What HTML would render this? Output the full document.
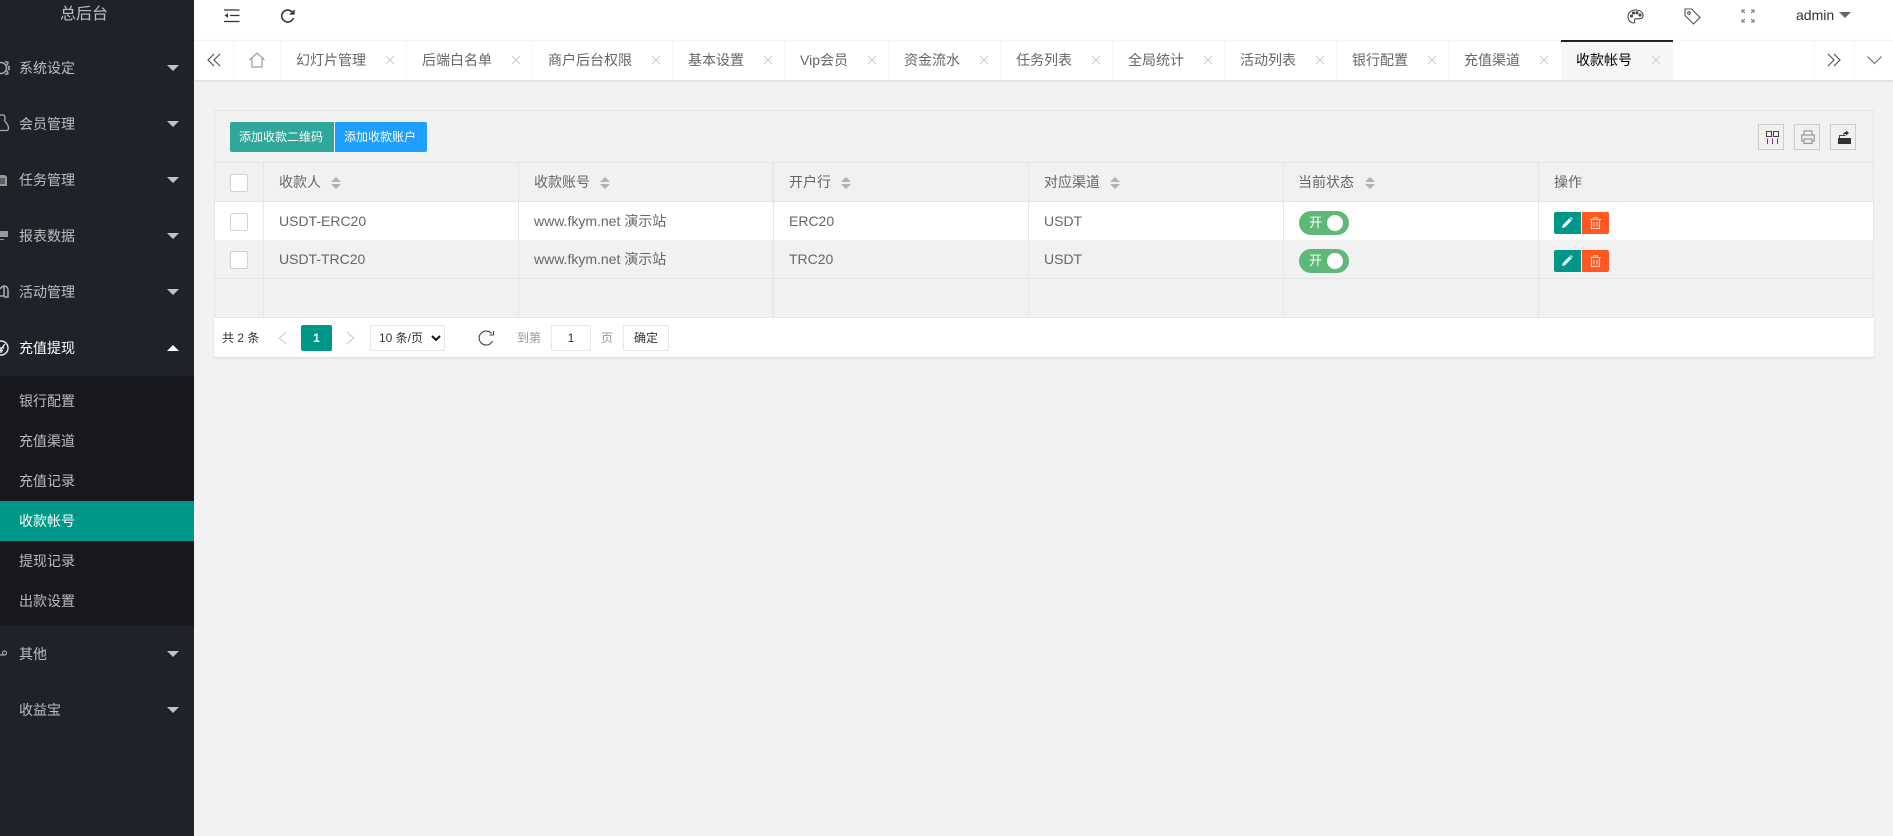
<!DOCTYPE html>
<html lang="zh"><head><meta charset="utf-8"><title>收款帐号</title>
<style>
*{box-sizing:border-box}
html,body{margin:0;padding:0;width:1893px;height:836px;overflow:hidden;background:#f2f2f2;font-family:"Liberation Sans","Noto Sans CJK SC",sans-serif;font-size:14px;color:#666}
span.t,div.t{position:absolute;white-space:nowrap;line-height:20px;height:20px}
svg{position:absolute;display:block}
#side{position:absolute;left:0;top:0;width:194px;height:836px;background:#20222a;overflow:hidden}
#side .t{left:19px;color:rgba(255,255,255,.7)}
.ar{position:absolute;left:167px;width:0;height:0;border-left:6px solid transparent;border-right:6px solid transparent;border-top:6px solid #c2c2c2}
#sub{position:absolute;left:0;top:376px;width:194px;height:250px;background:#17181d}
#act{position:absolute;left:0;top:501px;width:194px;height:40px;background:#009688}
#tabs{position:absolute;left:194px;top:40px;width:1699px;height:40px;background:#fff;border-top:1px solid #f6f6f6;box-shadow:0 1px 2px rgba(0,0,0,.12)}
.sp{position:absolute;top:41px;width:1px;height:39px;background:#f6f6f6}
.tb{position:absolute;top:50px;color:#666;line-height:20px;white-space:nowrap}
.ln{position:absolute;background:#e6e6e6}
.th,.td{position:absolute;white-space:nowrap;line-height:20px;color:#666}
.so{position:absolute;width:10px;height:12px}
.so:before,.so:after{content:"";position:absolute;left:0;border-left:5px solid transparent;border-right:5px solid transparent}
.so:before{top:0;border-bottom:5px solid #b2b2b2}
.so:after{bottom:0;border-top:5px solid #b2b2b2}
.cb{position:absolute;left:230px;width:18px;height:18px;background:#fff;border:1px solid #d2d2d2;border-radius:2px}
.sw{position:absolute;left:1299px;width:50px;height:24px;border-radius:12px;background:#5fb878}
.sw i{position:absolute;left:28px;top:4px;width:16px;height:16px;border-radius:50%;background:#fff}
.sw b{position:absolute;left:10px;top:2px;font-weight:400;font-size:13px;line-height:20px;color:#fff}
.be,.bd{position:absolute;width:27px;height:22px}
.be{left:1554px;background:#009688;border-radius:2px 0 0 2px}
.bd{left:1582px;background:#ff5722;border-radius:0 2px 2px 0}
.ib{position:absolute;top:124px;width:26px;height:26px;border:1px solid #ccc}
.x{position:absolute;top:56px}
</style></head><body>

<div id="side">
<span class="t" style="left:60px;top:5px;font-size:16px;width:48px;height:20px;color:rgba(255,255,255,.7)">总后台</span>
<div style="position:absolute;left:0;top:39px;width:194px;height:1px;background:#1c1e25"></div>
<div id="sub"></div><div id="act"></div>

<svg style="left:0;top:60px" width="10" height="16" viewBox="0 0 10 16" fill="none" stroke="#aaa" stroke-width="1.5"><circle cx="1" cy="8" r="5.5"/><path d="M5 1.500l3 1-1 3M8 6.500h1v3H8M5 14.500l3-1-1-3"/></svg>
<svg style="left:0;top:114px" width="10" height="18" viewBox="0 0 10 18" fill="none" stroke="#aaa" stroke-width="1.3"><path d="M0 1h3c2 0 2.500 3 1.500 5.500 1 2 4 3.500 4 8 0 1-1 2-2 2H0"/></svg>
<svg style="left:0;top:174px" width="7" height="12" viewBox="0 0 7 12" fill="#999"><path d="M0 1h5l2 2v9H0z"/><path d="M0 5h5M0 7h5M0 9h5" stroke="#20222a"/></svg>
<svg style="left:0;top:230px" width="8" height="11" viewBox="0 0 8 11" fill="#999"><path d="M0 1h8v6H0zM0 9h4v1H0z"/></svg>
<svg style="left:0;top:285px" width="9" height="14" viewBox="0 0 9 14" fill="none" stroke="#aaa" stroke-width="1.6"><path d="M0 4c2-3 4-3 4-3v10H0M4 1c3 0 4 2 4 4v7H4"/></svg>
<svg style="left:0;top:340px" width="10" height="16" viewBox="0 0 10 16" fill="none" stroke="#eee" stroke-width="1.4"><circle cx="1" cy="8" r="7"/><path d="M0 8h4M0 10.500h3M5 4L1 9v4"/></svg>
<svg style="left:0;top:650px" width="8" height="8" viewBox="0 0 8 8" fill="none" stroke="#aaa" stroke-width="1.2"><circle cx="4.500" cy="3" r="2"/><path d="M0 5h3"/></svg>

<span class="t" style="top:58px">系统设定</span><i class="ar" style="top:65px"></i>
<span class="t" style="top:114px">会员管理</span><i class="ar" style="top:121px"></i>
<span class="t" style="top:170px">任务管理</span><i class="ar" style="top:177px"></i>
<span class="t" style="top:226px">报表数据</span><i class="ar" style="top:233px"></i>
<span class="t" style="top:282px">活动管理</span><i class="ar" style="top:289px"></i>
<span class="t" style="top:338px;color:#fff">充值提现</span><i class="ar" style="top:345px;border-top:0;border-bottom:6px solid #fff"></i>
<span class="t" style="top:391px">银行配置</span>
<span class="t" style="top:431px">充值渠道</span>
<span class="t" style="top:471px">充值记录</span>
<span class="t" style="top:511px;color:#fff">收款帐号</span>
<span class="t" style="top:551px">提现记录</span>
<span class="t" style="top:591px">出款设置</span>
<span class="t" style="top:644px">其他</span><i class="ar" style="top:651px"></i>
<span class="t" style="top:700px">收益宝</span><i class="ar" style="top:707px"></i>
</div>

<!-- header -->
<div style="position:absolute;left:194px;top:0;width:1699px;height:40px;background:#fff"></div>
<svg style="left:224px;top:9px" width="16" height="14" viewBox="0 0 16 14" fill="none" stroke="#333" stroke-width="1.3"><path d="M0 1h15.500M6 6.500h9.500M0 12.500h15.500"/><path d="M.5 6.500L4 4.200v4.600z" fill="#333" stroke="none"/></svg>
<svg style="left:280px;top:8px" width="16" height="16" viewBox="0 0 16 16" fill="none" stroke="#333" stroke-width="1.6"><path d="M13.400 10a6 6 0 1 1-1.400-6.200"/><path d="M14.600 1.200v5.400H9.200z" fill="#333" stroke="none"/></svg>
<svg style="left:1627px;top:9px" width="17" height="15" viewBox="0 0 17 15" fill="none" stroke="#444" stroke-width="1.1"><path d="M8.500 1C4 1 1 4 1 8s3.500 6 5.500 6c1.500 0 1.500-1 1-2-.5-1.300.5-2.500 2-2.300 3 .3 6.500 0 6.500-3C16 3 12.500 1 8.500 1z"/><circle cx="4.500" cy="7" r="1" fill="#444"/><circle cx="6.500" cy="4" r="1" fill="#444"/><circle cx="10" cy="3.800" r="1" fill="#444"/><circle cx="13" cy="6" r="1" fill="#444"/></svg>
<svg style="left:1684px;top:8px" width="17" height="17" viewBox="0 0 17 17" fill="none" stroke="#555" stroke-width="1.1"><path d="M1 1h6.500l8.500 8.500L9.500 16 1 7.500z"/><circle cx="5" cy="5" r="1.300"/></svg>
<svg style="left:1741px;top:9px" width="14" height="14" viewBox="0 0 14 14" fill="none" stroke="#777" stroke-width="1"><path d="M1 4V1h3M1 1l3 3M10 1h3v3M13 1l-3 3M1 10v3h3M1 13l3-3M13 10v3h-3M13 13l-3-3"/></svg>
<span class="t" style="left:1796px;top:5px;color:#333;font-size:14px">admin</span>
<i style="position:absolute;left:1839px;top:12px;width:0;height:0;border-left:6px solid transparent;border-right:6px solid transparent;border-top:6px solid #666"></i>

<!-- tabs -->
<div id="tabs"></div>
<div style="position:absolute;left:1561px;top:40px;width:112px;height:40px;background:#f6f6f6;border-top:2px solid #20222a"></div>
<div class="sp" style="left:233px"></div><div class="sp" style="left:280px"></div><div class="sp" style="left:406px"></div><div class="sp" style="left:532px"></div><div class="sp" style="left:672px"></div><div class="sp" style="left:784px"></div><div class="sp" style="left:888px"></div><div class="sp" style="left:1000px"></div><div class="sp" style="left:1112px"></div><div class="sp" style="left:1224px"></div><div class="sp" style="left:1336px"></div><div class="sp" style="left:1448px"></div><div class="sp" style="left:1814px"></div><div class="sp" style="left:1854px"></div>

<svg style="left:207px;top:53px" width="14" height="14" viewBox="0 0 14 14" fill="none" stroke="#555" stroke-width="1.2"><path d="M7 1L1 7l6 6M13 1L7 7l6 6"/></svg>
<svg style="left:249px;top:52px" width="16" height="16" viewBox="0 0 16 16" fill="none" stroke="#888" stroke-width="1"><path d="M.5 8L8 1l7.500 7M3 6.500V15h10V6.500"/></svg>

<span class="tb" style="left:296px">幻灯片管理</span>
<span class="tb" style="left:422px">后端白名单</span>
<span class="tb" style="left:548px">商户后台权限</span>
<span class="tb" style="left:688px">基本设置</span>
<span class="tb" style="left:800px">Vip会员</span>
<span class="tb" style="left:904px">资金流水</span>
<span class="tb" style="left:1016px">任务列表</span>
<span class="tb" style="left:1128px">全局统计</span>
<span class="tb" style="left:1240px">活动列表</span>
<span class="tb" style="left:1352px">银行配置</span>
<span class="tb" style="left:1464px">充值渠道</span>
<span class="tb" style="left:1576px;color:#000">收款帐号</span>

<svg class="x" style="left:386px" width="8" height="8" viewBox="0 0 8 8" stroke="#ccc"><path d="M0 0l8 8M8 0L0 8"/></svg>
<svg class="x" style="left:512px" width="8" height="8" viewBox="0 0 8 8" stroke="#ccc"><path d="M0 0l8 8M8 0L0 8"/></svg>
<svg class="x" style="left:652px" width="8" height="8" viewBox="0 0 8 8" stroke="#ccc"><path d="M0 0l8 8M8 0L0 8"/></svg>
<svg class="x" style="left:764px" width="8" height="8" viewBox="0 0 8 8" stroke="#ccc"><path d="M0 0l8 8M8 0L0 8"/></svg>
<svg class="x" style="left:868px" width="8" height="8" viewBox="0 0 8 8" stroke="#ccc"><path d="M0 0l8 8M8 0L0 8"/></svg>
<svg class="x" style="left:980px" width="8" height="8" viewBox="0 0 8 8" stroke="#ccc"><path d="M0 0l8 8M8 0L0 8"/></svg>
<svg class="x" style="left:1092px" width="8" height="8" viewBox="0 0 8 8" stroke="#ccc"><path d="M0 0l8 8M8 0L0 8"/></svg>
<svg class="x" style="left:1204px" width="8" height="8" viewBox="0 0 8 8" stroke="#ccc"><path d="M0 0l8 8M8 0L0 8"/></svg>
<svg class="x" style="left:1316px" width="8" height="8" viewBox="0 0 8 8" stroke="#ccc"><path d="M0 0l8 8M8 0L0 8"/></svg>
<svg class="x" style="left:1428px" width="8" height="8" viewBox="0 0 8 8" stroke="#ccc"><path d="M0 0l8 8M8 0L0 8"/></svg>
<svg class="x" style="left:1540px" width="8" height="8" viewBox="0 0 8 8" stroke="#ccc"><path d="M0 0l8 8M8 0L0 8"/></svg>
<svg class="x" style="left:1652px" width="8" height="8" viewBox="0 0 8 8" stroke="#ccc"><path d="M0 0l8 8M8 0L0 8"/></svg>

<svg style="left:1827px;top:53px" width="14" height="14" viewBox="0 0 14 14" fill="none" stroke="#555" stroke-width="1.2"><path d="M1 1l6 6-6 6M7 1l6 6-6 6"/></svg>
<svg style="left:1867px;top:56px" width="15" height="9" viewBox="0 0 15 9" fill="none" stroke="#666" stroke-width="1.1"><path d="M.5 .5l7 7 7-7"/></svg>

<!-- card -->
<div style="position:absolute;left:214px;top:110px;width:1660px;height:208px;background:#f1f1f1;border:1px solid #e6e6e6;border-bottom:0"></div>
<div style="position:absolute;left:215px;top:202px;width:1658px;height:38px;background:#fff"></div>
<div style="position:absolute;left:214px;top:318px;width:1660px;height:39px;background:#fff;box-shadow:0 1px 2px rgba(0,0,0,.1)"></div>

<div class="ln" style="left:214px;top:162px;width:1660px;height:1px"></div>
<div class="ln" style="left:214px;top:201px;width:1660px;height:1px"></div>
<div class="ln" style="left:214px;top:278px;width:1660px;height:1px"></div>
<div class="ln" style="left:214px;top:317px;width:1660px;height:1px"></div>
<div class="ln" style="left:263px;top:163px;width:1px;height:154px"></div>
<div class="ln" style="left:518px;top:163px;width:1px;height:154px"></div>
<div class="ln" style="left:773px;top:163px;width:1px;height:154px;box-shadow:-1px 0 1px rgba(0,0,0,.04)"></div>
<div class="ln" style="left:1028px;top:163px;width:1px;height:154px"></div>
<div class="ln" style="left:1283px;top:163px;width:1px;height:154px"></div>
<div class="ln" style="left:1538px;top:163px;width:1px;height:154px"></div>

<!-- toolbar -->
<div style="position:absolute;left:230px;top:122px;width:104px;height:30px;background:#2fa79b;border-radius:2px 0 0 2px;color:#fff;font-size:12px;line-height:30px;padding-left:9px;white-space:nowrap">添加收款二维码</div>
<div style="position:absolute;left:335px;top:122px;width:92px;height:30px;background:#1e9fff;border-radius:0 2px 2px 0;color:#fff;font-size:12px;line-height:30px;padding-left:9px;white-space:nowrap">添加收款账户</div>

<div class="ib" style="left:1758px"><svg style="left:7px;top:6px" width="13" height="13" viewBox="0 0 13 13" fill="none" stroke="#444" stroke-width="1"><path d="M.5.500h5v5h-5zM7.500.500h5v5h-5z"/><path d="M1.500 7.500V13M6.500 7.500V13M11.500 7.500V13" stroke="#803080"/></svg></div>
<div class="ib" style="left:1794px"><svg style="left:6px;top:5px" width="14" height="14" viewBox="0 0 14 14" fill="none" stroke="#999" stroke-width="1.2"><path d="M3 5V1h8v4M3 11H.7V5h12.600v6H11"/><path d="M3 9h8v4.400H3z"/></svg></div>
<div class="ib" style="left:1830px"><svg style="left:7px;top:5px" width="13" height="14" viewBox="0 0 13 14"><path d="M0 8h13v6H0z" fill="#333"/><path d="M1.500 8V5.500h6" fill="none" stroke="#444"/><path d="M5 5c0-2 1.500-3 3-3V.500L11 3 8 5.500V4C6.500 4 5.500 4.500 5 5z" fill="#333"/></svg></div>

<!-- head -->
<div class="cb" style="top:174px"></div>
<span class="th" style="left:279px;top:172px">收款人</span><i class="so" style="left:331px;top:177px"></i>
<span class="th" style="left:534px;top:172px">收款账号</span><i class="so" style="left:600px;top:177px"></i>
<span class="th" style="left:789px;top:172px">开户行</span><i class="so" style="left:841px;top:177px"></i>
<span class="th" style="left:1044px;top:172px">对应渠道</span><i class="so" style="left:1110px;top:177px"></i>
<span class="th" style="left:1298px;top:172px">当前状态</span><i class="so" style="left:1365px;top:177px"></i>
<span class="th" style="left:1554px;top:172px">操作</span>

<!-- row 1 -->
<div class="cb" style="top:213px"></div>
<span class="td" style="left:279px;top:211px">USDT-ERC20</span>
<span class="td" style="left:534px;top:211px">www.fkym.net 演示站</span>
<span class="td" style="left:789px;top:211px">ERC20</span>
<span class="td" style="left:1044px;top:211px">USDT</span>
<div class="sw" style="top:211px"><b>开</b><i></i></div>
<div class="be" style="top:212px"><svg style="left:8px;top:5px" width="11" height="11" viewBox="0 0 11 11" fill="#fff"><path d="M0 11l.8-3L7.500 1.300l2.200 2.200L3 10.200zM8.200.6l.7-.6 2 2-.6.700z"/></svg></div>
<div class="bd" style="top:212px"><svg style="left:8px;top:5px" width="11" height="12" viewBox="0 0 11 12" fill="none" stroke="#ffd5c8" stroke-width="1.1"><path d="M0 2.500h11M3.500 2.500V.7h4v1.800M1.500 2.500v9h8v-9M4 5v4.500M7 5v4.500"/></svg></div>

<!-- row 2 -->
<div class="cb" style="top:251px"></div>
<span class="td" style="left:279px;top:249px">USDT-TRC20</span>
<span class="td" style="left:534px;top:249px">www.fkym.net 演示站</span>
<span class="td" style="left:789px;top:249px">TRC20</span>
<span class="td" style="left:1044px;top:249px">USDT</span>
<div class="sw" style="top:249px"><b>开</b><i></i></div>
<div class="be" style="top:250px"><svg style="left:8px;top:5px" width="11" height="11" viewBox="0 0 11 11" fill="#fff"><path d="M0 11l.8-3L7.500 1.300l2.200 2.200L3 10.200zM8.200.6l.7-.6 2 2-.6.700z"/></svg></div>
<div class="bd" style="top:250px"><svg style="left:8px;top:5px" width="11" height="12" viewBox="0 0 11 12" fill="none" stroke="#ffd5c8" stroke-width="1.1"><path d="M0 2.500h11M3.500 2.500V.7h4v1.800M1.500 2.500v9h8v-9M4 5v4.500M7 5v4.500"/></svg></div>

<!-- pagination -->
<span class="t" style="left:222px;top:328px;font-size:12px;color:#333">共 2 条</span>
<svg style="left:278px;top:331px" width="9" height="14" viewBox="0 0 9 14" fill="none" stroke="#d2d2d2" stroke-width="1.4"><path d="M8 1L1.500 7 8 13"/></svg>
<div style="position:absolute;left:301px;top:325px;width:31px;height:26px;background:#009688;border-radius:2px;color:#fff;font-size:12px;text-align:center;line-height:26px;font-weight:700">1</div>
<svg style="left:346px;top:331px" width="9" height="14" viewBox="0 0 9 14" fill="none" stroke="#d2d2d2" stroke-width="1.4"><path d="M1 1l6.500 6L1 13"/></svg>
<div style="position:absolute;left:370px;top:325px;width:75px;height:26px;background:#fff;border:1px solid #e6e6e6;border-radius:2px;font-size:12px;color:#333;line-height:24px;padding-left:8px;white-space:nowrap">10 条/页</div>
<svg style="left:431px;top:335px" width="10" height="7" viewBox="0 0 10 7" fill="none" stroke="#111" stroke-width="2"><path d="M1 1l4 4 4-4"/></svg>
<svg style="left:478px;top:330px" width="18" height="17" viewBox="0 0 18 17" fill="none" stroke="#444" stroke-width="1.1"><path d="M14.500 11a7 7 0 1 1-1-7.500"/><path d="M15.500 1v4h-4"/></svg>
<span class="t" style="left:517px;top:328px;font-size:12px;color:#999">到第</span>
<div style="position:absolute;left:551px;top:325px;width:40px;height:26px;background:#fff;border:1px solid #e6e6e6;border-radius:2px;font-size:12px;color:#333;text-align:center;line-height:24px">1</div>
<span class="t" style="left:601px;top:328px;font-size:12px;color:#999">页</span>
<div style="position:absolute;left:623px;top:325px;width:46px;height:26px;background:#fff;border:1px solid #e6e6e6;border-radius:2px;font-size:12px;color:#333;text-align:center;line-height:25px">确定</div>

</body></html>
